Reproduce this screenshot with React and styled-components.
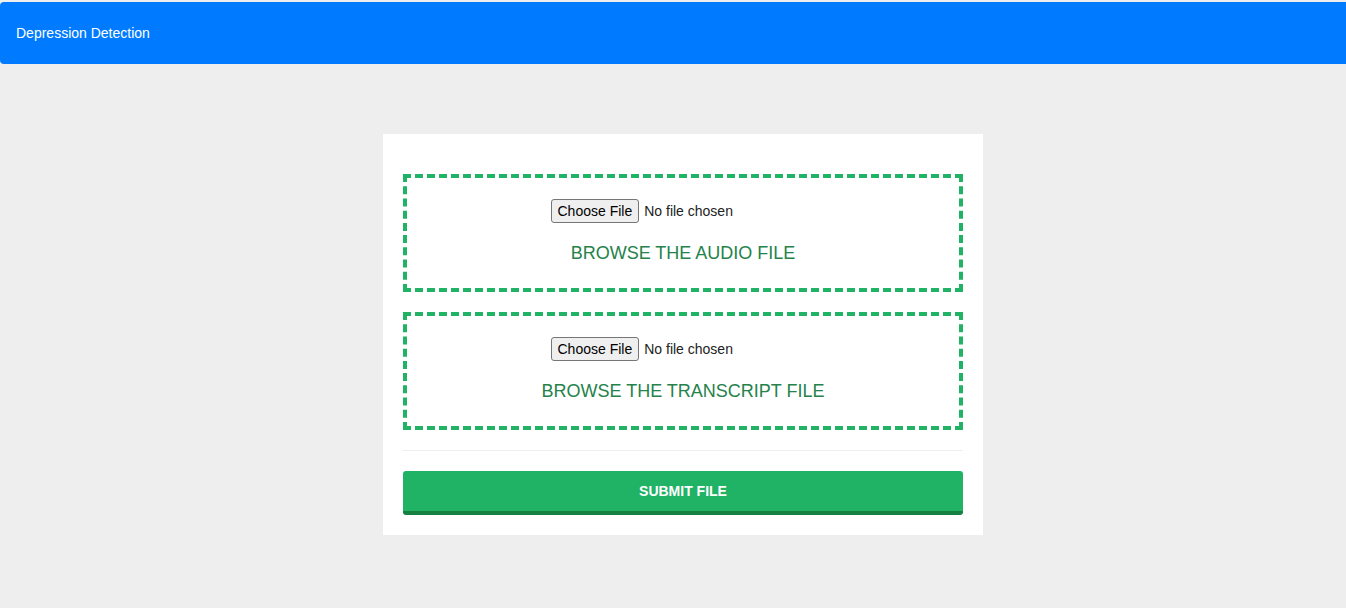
import styled, { createGlobalStyle } from 'styled-components';

const GlobalStyle = createGlobalStyle`
  body {
    margin: 0;
    background: #eeeeee;
    font-family: 'Liberation Sans', Arial, sans-serif;
    overflow: hidden;
  }
`;

const Page = styled.div`
  width: 1366px;
  padding-top: 2px;
  min-height: 606px;
`;

const Header = styled.header`
  height: 62px;
  background: #007bff;
  border-radius: 4px;
  display: flex;
  align-items: center;
  padding: 0 16px;
`;

const Title = styled.span`
  color: #ffffff;
  font-size: 14px;
`;

const Card = styled.form`
  width: 560px;
  margin: 70px auto 0;
  background: #ffffff;
  padding: 40px 20px 20px;
  display: flex;
  flex-direction: column;
  gap: 20px;
`;

const DropZone = styled.div`
  height: 118px;
  box-sizing: border-box;
  border: 4px dashed #20b265;
  display: flex;
  flex-direction: column;
  align-items: center;
  padding-top: 21px;
`;

const FileInput = styled.input`
  font-family: 'Liberation Sans', Arial, sans-serif;
  font-size: 14px;
  color: #222;

  &::file-selector-button {
    font-family: inherit;
    font-size: 14px;
    padding: 3px 6px;
    margin-right: 5px;
    color: #000;
    background: #efefef;
    border: 1px solid #767676;
    border-radius: 3px;
  }
`;

const DropLabel = styled.div`
  margin-top: 20px;
  color: #24824a;
  font-size: 18px;
`;

const Divider = styled.hr`
  border: none;
  border-top: 1px solid #eeeeee;
  margin: 0;
`;

const SubmitButton = styled.button`
  height: 44px;
  border: none;
  border-bottom: 4px solid #168043;
  border-radius: 3px;
  background: #20b265;
  color: #ffffff;
  font-family: 'Liberation Sans', Arial, sans-serif;
  font-weight: 700;
  font-size: 14px;
  cursor: pointer;
`;

const Upload = ({ label }) => (
  <DropZone>
    <FileInput type="file" />
    <DropLabel>{label}</DropLabel>
  </DropZone>
);

export default function App() {
  return (
    <Page>
      <GlobalStyle />
      <Header>
        <Title>Depression Detection</Title>
      </Header>
      <Card onSubmit={(e) => e.preventDefault()}>
        <Upload label="BROWSE THE AUDIO FILE" />
        <Upload label="BROWSE THE TRANSCRIPT FILE" />
        <Divider />
        <SubmitButton type="submit">SUBMIT FILE</SubmitButton>
      </Card>
    </Page>
  );
}
